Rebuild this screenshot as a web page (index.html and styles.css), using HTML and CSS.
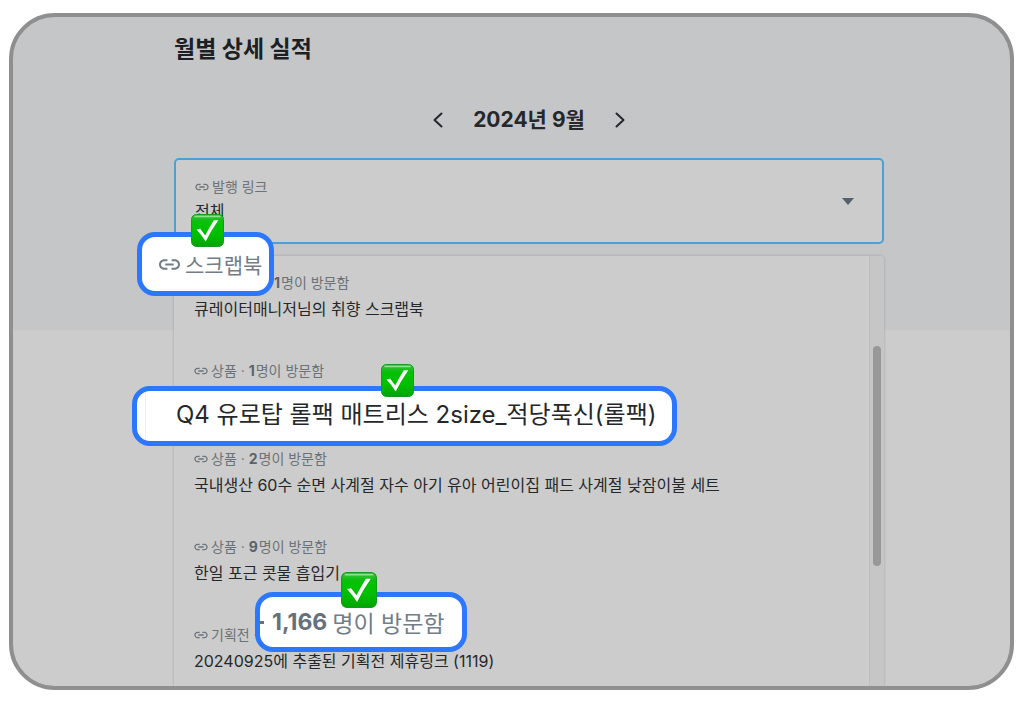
FILE: index.html
```html
<!DOCTYPE html>
<html lang="ko">
<head>
    <meta charset="UTF-8">
    <meta name="viewport" content="width=device-width, initial-scale=1.0">
    <title>월별 상세 실적</title>
    <link rel="stylesheet" href="styles.css">
</head>
<body>
    <svg class="sprite" aria-hidden="true">
        <defs>
            <linearGradient id="green" x1="0" y1="0" x2="0" y2="1">
                <stop offset="0" stop-color="#3fc443"/>
                <stop offset="0.2" stop-color="#10bd12"/>
                <stop offset="0.3" stop-color="#00c400"/>
                <stop offset="0.65" stop-color="#00bd00"/>
                <stop offset="1" stop-color="#02a404"/>
            </linearGradient>
        </defs>
        <symbol id="link" viewBox="2 6 20 12">
            <path d="M3.9 12c0-1.71 1.39-3.1 3.1-3.1h3V7H7c-2.76 0-5 2.24-5 5s2.24 5 5 5h3v-1.9H7c-1.71 0-3.1-1.39-3.1-3.1zM8 13h8v-2H8v2zm9-6h-3v1.9h3c1.71 0 3.1 1.39 3.1 3.1s-1.39 3.1-3.1 3.1h-3V17h3c2.76 0 5-2.24 5-5s-2.24-5-5-5z"/>
        </symbol>
        <symbol id="check" viewBox="0 0 33 33">
            <rect x="0.5" y="0.5" width="32" height="32" rx="5" fill="url(#green)" stroke="#159a1b"/>
            <path d="M4 2.5h25" stroke="#8fe08f" stroke-width="1.5" stroke-linecap="round"/>
            <path d="M5.5 15.6L9.3 14.8L14.2 21.4Q18.5 13 22.8 6.2L27.3 6.2Q20.3 16 14.7 27.6Q10.5 21 5.5 15.6z" fill="#fff"/>
        </symbol>
    </svg>

    <main class="frame">
        <div class="content">
            <h1 class="title">월별 상세 실적</h1>

            <div class="month-nav">
                <button class="month-button" type="button" aria-label="이전 달">
                    <svg width="10" height="16" viewBox="0 0 10 16"><path d="M8.5 1.5L1.5 8l7 6.5"/></svg>
                </button>
                <h2 class="month">2024년 9월</h2>
                <button class="month-button" type="button" aria-label="다음 달">
                    <svg width="10" height="16" viewBox="0 0 10 16"><path d="M1.5 1.5L8.5 8l-7 6.5"/></svg>
                </button>
            </div>

            <div class="field">
                <div class="field-text">
                    <label class="meta" for="link-select"><svg class="link-icon"><use href="#link"/></svg>발행 링크</label>
                    <select class="field-select" id="link-select">
                        <option>전체</option>
                    </select>
                </div>
                <svg class="arrow" viewBox="0 0 12 7"><path d="M0 0h12L6 7z"/></svg>
            </div>

            <div class="dropdown">
                <ul class="options">
                    <li class="option">
                        <div class="meta meta-indented"><b>1</b><span>명이 방문함</span></div>
                        <div class="option-name">큐레이터매니저님의 취향 스크랩북</div>
                    </li>
                    <li class="option">
                        <div class="meta"><svg class="link-icon"><use href="#link"/></svg>상품 · <b>1</b><span>명이 방문함</span></div>
                    </li>
                    <li class="option">
                        <div class="meta"><svg class="link-icon"><use href="#link"/></svg>상품 · <b>2</b><span>명이 방문함</span></div>
                        <div class="option-name">국내생산 60수 순면 사계절 자수 아기 유아 어린이집 패드 사계절 낮잠이불 세트</div>
                    </li>
                    <li class="option">
                        <div class="meta"><svg class="link-icon"><use href="#link"/></svg>상품 · <b>9</b><span>명이 방문함</span></div>
                        <div class="option-name">한일 포근 콧물 흡입기</div>
                    </li>
                    <li class="option">
                        <div class="meta"><svg class="link-icon"><use href="#link"/></svg>기획전 ·</div>
                        <div class="option-name">20240925에 추출된 기획전 제휴링크 (1119)</div>
                    </li>
                </ul>
                <div class="scrollbar"><div class="thumb"></div></div>
            </div>

            <div class="callout callout-type">
                <svg class="link-icon"><use href="#link"/></svg>스크랩북
                <svg class="badge"><use href="#check"/></svg>
            </div>
            <div class="callout callout-name">
                Q4 유로탑 롤팩 매트리스 2size_적당푹신(롤팩)
                <svg class="badge"><use href="#check"/></svg>
            </div>
            <div class="callout callout-visits">
                <span class="dot"></span><b>1,166</b>명이 방문함
                <svg class="badge"><use href="#check"/></svg>
            </div>
        </div>
    </main>
</body>
</html>
```
FILE: styles.css
```css
* {
    margin: 0;
    padding: 0;
    box-sizing: border-box;
}

body {
    font-family: Inter, 'Noto Sans CJK KR', sans-serif;
    background: #fff;
    color: #25282b;
    padding: 13px 9px;
}

.sprite {
    position: absolute;
    width: 0;
    height: 0;
}

.frame {
    border: 4px solid #8f8f8f;
    border-radius: 46px;
    background: linear-gradient(#c5c6c8 313px, #ccc 313px);
    padding: 0 126px 0 161px;
    overflow: hidden;
}

.content {
    position: relative;
    padding-top: 16px;
}

.title {
    font-size: 23px;
    font-weight: 700;
    line-height: 32px;
    color: #1c1f23;
}

.month-nav {
    display: flex;
    justify-content: center;
    align-items: center;
    gap: 26px;
    margin-top: 39px;
}

.month {
    font-size: 21px;
    font-weight: 700;
    line-height: 32px;
}

.month-button {
    display: flex;
    padding: 4px;
    border: 0;
    background: none;
}

.month-button path {
    fill: none;
    stroke: #25282b;
    stroke-width: 2;
    stroke-linecap: round;
    stroke-linejoin: round;
}

.field {
    display: flex;
    align-items: center;
    height: 86px;
    margin-top: 22px;
    padding: 0 28px 0 19px;
    background: #ccc;
    border: 2px solid #4d9fd6;
    border-radius: 5px;
}

.field-text {
    flex: 1;
    align-self: flex-start;
    padding-top: 15px;
}

.meta {
    display: flex;
    align-items: center;
    font-size: 14px;
    line-height: 24px;
    color: #6b7278;
    white-space: pre;
}

.meta b {
    color: #5c646b;
    margin-right: 1px;
}

.meta-indented {
    padding-left: 80px;
}

.link-icon {
    width: 14px;
    height: 8px;
    margin-right: 3px;
    fill: currentColor;
}

.field-select {
    display: block;
    width: 100%;
    height: 24px;
    border: 0;
    background: none;
    appearance: none;
    font: inherit;
    font-size: 16px;
    color: inherit;
}

.arrow {
    width: 12px;
    height: 7px;
    fill: #566068;
}

.dropdown {
    display: flex;
    max-height: 430px;
    margin-top: 12px;
    background: #ccc;
    border-radius: 4px 4px 0 0;
    box-shadow: 0 0 3px rgba(0, 0, 0, 0.2);
    overflow: hidden;
}

.options {
    flex: 1;
    list-style: none;
}

.option {
    height: 88px;
    padding: 15px 20px 0;
}

.option-name {
    margin-top: 2px;
    font-size: 16px;
    line-height: 24px;
}

.scrollbar {
    width: 15px;
    padding: 90px 3px 0;
    background: #c6c6c6;
    border-left: 1px solid #bdbdbd;
}

.thumb {
    width: 8px;
    height: 220px;
    border-radius: 4px;
    background: #989898;
}

/* Highlighted parts, floating over the list */
.callout {
    position: absolute;
    display: flex;
    align-items: center;
    height: 60px;
    background: #fff;
    border: 5px solid #2b78ff;
    border-radius: 18px;
    font-size: 23px;
    color: #727d86;
    white-space: nowrap;
}

.callout-type {
    top: 215px;
    left: -37px;
    width: 137px;
    height: 64px;
    padding-left: 17px;
    font-size: 21px;
}

.callout-type .link-icon {
    width: 21px;
    height: 13px;
    margin-right: 5px;
}

.callout-name {
    top: 369px;
    left: -42px;
    width: 545px;
    padding: 0 0 8px 39px;
    font-size: 24px;
    color: #25282b;
    background: linear-gradient(90deg, #fff 8px, #eceeef 8px, #eceeef 9px, #fff 9px);
}

.callout-visits {
    top: 575px;
    left: 81px;
    width: 212px;
}

.callout-visits b {
    margin: 0 5px 0 8px;
    color: #65717b;
}

.dot {
    width: 4px;
    height: 3px;
    background: #65717b;
}

.badge {
    position: absolute;
    width: 33px;
    height: 33px;
}

.callout-type .badge {
    top: -23px;
    left: 49px;
}

.callout-name .badge {
    top: -27px;
    left: 244px;
}

.callout-visits .badge {
    top: -25px;
    left: 81px;
    width: 36px;
    height: 36px;
}
```
